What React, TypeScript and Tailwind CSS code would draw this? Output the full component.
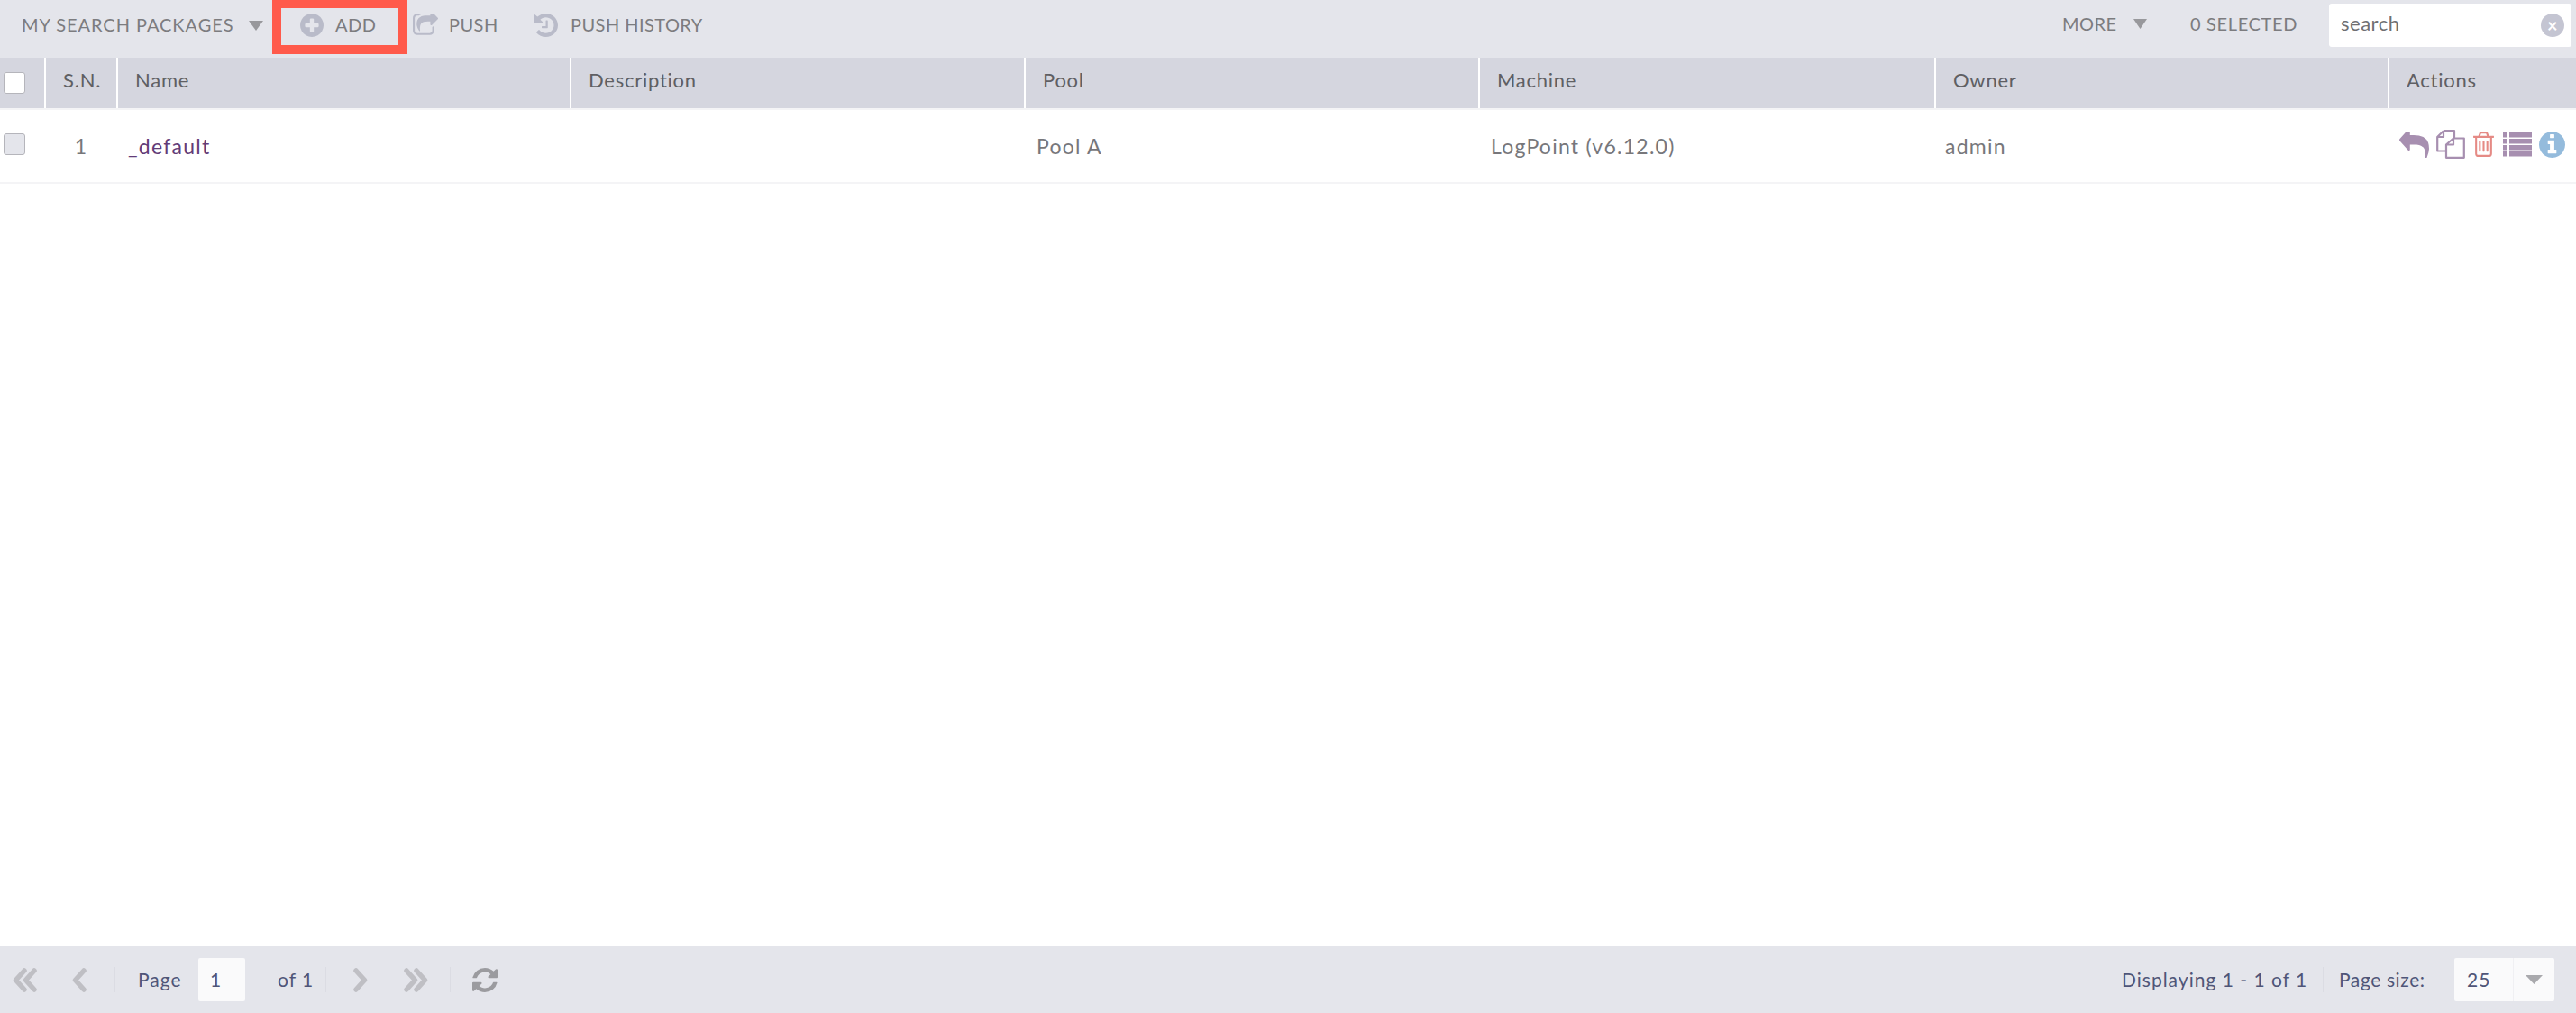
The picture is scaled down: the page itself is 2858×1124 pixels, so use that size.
import React from "react";

const FA = {
  plus: "M1344 960v-128q0-26-19-45t-45-19h-256v-256q0-26-19-45t-45-19h-128q-26 0-45 19t-19 45v256h-256q-26 0-45 19t-19 45v128q0 26 19 45t45 19h256v256q0 26 19 45t45 19h128q26 0 45-19t19-45v-256h256q26 0 45-19t19-45zm320-64q0 209-103 385.5t-279.5 279.5-385.5 103-385.5-103-279.5-279.5-103-385.5 103-385.5 279.5-279.5 385.5-103 385.5 103 279.5 279.5 103 385.5z",
  share: "M1472 989v259q0 119-84.5 203.5t-203.5 84.5h-832q-119 0-203.5-84.5t-84.5-203.5v-832q0-119 84.5-203.5t203.5-84.5h255q13 0 22.5 9.5t9.5 22.5q0 27-26 32-77 26-133 60-10 4-16 4h-112q-66 0-113 47t-47 113v832q0 66 47 113t113 47h832q66 0 113-47t47-113v-214q0-19 18-29 28-13 54-37 16-16 35-8 21 9 21 29zm237-496l-384 384q-18 19-45 19-12 0-25-5-39-17-39-59v-192h-160q-323 0-438 131-119 137-74 473 3 23-20 34-8 2-12 2-16 0-26-13-10-14-21-31t-39.5-68.5-49.5-99.5-38.5-114-17.5-122q0-49 3.5-91t14-90 28-88 47-81.5 68.5-74 94.5-61.5 124.5-48.5 159.5-30.5 196.5-11h160v-192q0-42 39-59 13-5 25-5 26 0 45 19l384 384q19 19 19 45t-19 45z",
  history: "M1664 896q0 156-61 298t-164 245-245 164-298 61q-172 0-327-72.5t-264-204.5q-7-10-6.5-22.5t8.5-20.5l137-138q10-9 25-9 16 2 23 12 73 95 179 147t225 52q104 0 198.5-40.5t163.5-109.5 109.5-163.5 40.5-198.5-40.5-198.5-109.5-163.5-163.5-109.5-198.5-40.5q-98 0-188 35.5t-160 101.5l137 138q31 30 14 69-17 40-59 40h-448q-26 0-45-19t-19-45v-448q0-42 40-59 39-17 69 14l130 129q107-101 244.5-156.5t284.5-55.5q156 0 298 61t245 164 164 245 61 298zm-640-288v448q0 14-9 23t-23 9h-320q-14 0-23-9t-9-23v-64q0-14 9-23t23-9h224v-352q0-14 9-23t23-9h64q14 0 23 9t9 23z",
  reply: "M1792 1120q0 166-127 451-3 7-10.5 24t-13.5 30-13 22q-12 17-28 17-15 0-23.5-10t-8.5-25q0-9 2.5-26.5t2.5-23.5q5-68 5-123 0-101-17.5-181t-48.5-138.5-80-101-105.5-69.5-133-42.5-154-21.5-175.5-6h-224v256q0 26-19 45t-45 19-45-19l-512-512q-19-19-19-45t19-45l512-512q19-19 45-19t45 19 19 45v256h224q713 0 875 403 53 134 53 333z",
  trash: "M704 736v576q0 14-9 23t-23 9h-64q-14 0-23-9t-9-23v-576q0-14 9-23t23-9h64q14 0 23 9t9 23zm256 0v576q0 14-9 23t-23 9h-64q-14 0-23-9t-9-23v-576q0-14 9-23t23-9h64q14 0 23 9t9 23zm256 0v576q0 14-9 23t-23 9h-64q-14 0-23-9t-9-23v-576q0-14 9-23t23-9h64q14 0 23 9t9 23zm128 724v-948h-896v948q0 22 7 40.5t14.5 27 10.5 8.5h832q3 0 10.5-8.5t14.5-27 7-40.5zm-672-1076h448l-48-117q-7-9-17-11h-317q-10 2-17 11zm928 32v64q0 14-9 23t-23 9h-96v948q0 83-47 143.5t-113 60.5h-832q-66 0-113-58.5t-47-141.5v-952h-96q-14 0-23-9t-9-23v-64q0-14 9-23t23-9h309l70-167q15-37 54-63t79-26h320q40 0 79 26t54 63l70 167h309q14 0 23 9t9 23z",
  info: "M1152 1376v-160q0-14-9-23t-23-9h-96v-512q0-14-9-23t-23-9h-320q-14 0-23 9t-9 23v160q0 14 9 23t23 9h96v320h-96q-14 0-23 9t-9 23v160q0 14 9 23t23 9h448q14 0 23-9t9-23zm-128-896v-160q0-14-9-23t-23-9h-192q-14 0-23 9t-9 23v160q0 14 9 23t23 9h192q14 0 23-9t9-23zm640 416q0 209-103 385.5t-279.5 279.5-385.5 103-385.5-103-279.5-279.5-103-385.5 103-385.5 279.5-279.5 385.5-103 385.5 103 279.5 279.5 103 385.5z",
  refresh: "M1639 1056q0 5-1 7-64 268-268 434.5t-478 166.5q-146 0-282.5-55t-243.5-157l-129 129q-19 19-45 19t-45-19-19-45v-448q0-26 19-45t45-19h448q26 0 45 19t19 45-19 45l-137 137q71 66 161 102t187 36q134 0 250-65t186-179q11-17 53-117 8-23 30-23h192q13 0 22.5 9.5t9.5 22.5zm25-800v448q0 26-19 45t-45 19h-448q-26 0-45-19t-19-45 19-45l138-138q-148-137-349-137-134 0-250 65t-186 179q-11 17-53 117-8 23-30 23h-199q-13 0-22.5-9.5t-9.5-22.5v-7q65-268 270-434.5t480-166.5q146 0 284 55.5t245 156.5l130-129q19-19 45-19t45 19 19 45z",
};

function Fa({ d, vb = "128 128 1536 1536", className }: { d: string; vb?: string; className: string }) {
  return (
    <svg viewBox={vb} preserveAspectRatio="none" className={className} fill="currentColor">
      <path d={d} />
    </svg>
  );
}

function Caret({ className }: { className: string }) {
  return (
    <svg viewBox="0 0 16 10" preserveAspectRatio="none" className={className} fill="currentColor">
      <path d="M0 0h16L8 10z" />
    </svg>
  );
}

function Chevrons({ dir, count, className }: { dir: "left" | "right"; count: number; className: string }) {
  const width = count === 2 ? 29 : 21;
  const lines = count === 2 ? [13, 2] : [4];
  return (
    <svg viewBox={`0 0 ${width} 27`} className={className} fill="none" stroke="currentColor" strokeWidth="5.5" strokeLinecap="round" strokeLinejoin="round">
      <g transform={dir === "right" ? `translate(${width} 0) scale(-1 1)` : undefined}>
        {lines.map((x) => (
          <path key={x} d={`M${x + 11} 3 L${x + 1.5} 13.5 L${x + 11} 24`} />
        ))}
      </g>
    </svg>
  );
}

function ListIcon({ className }: { className: string }) {
  return (
    <svg viewBox="0 0 32 27" className={className} fill="currentColor">
      <rect x="0" y="0" width="5" height="5.5" />
      <rect x="7" y="0" width="25" height="5.5" />
      <rect x="0" y="7" width="5" height="5.5" />
      <rect x="7" y="7" width="25" height="5.5" />
      <rect x="0" y="14" width="5" height="5.5" />
      <rect x="7" y="14" width="25" height="5.5" />
      <rect x="0" y="21" width="5" height="5.5" />
      <rect x="7" y="21" width="25" height="5.5" />
    </svg>
  );
}

// two overlapping pages
function FilesIcon({ className }: { className: string }) {
  return (
    <svg viewBox="0 0 32 32" className={className} fill="none" stroke="currentColor" strokeWidth="2.2" strokeLinejoin="round">
      <path d="M8 1.2H20V10M8 1.2L1.2 8V23.5H11M8 1.2V8H1.2" />
      <path d="M19 9.5H30.8V30.8H11V16.5L19 9.5V16.5H11" />
    </svg>
  );
}

const headers = ["S.N.", "Name", "Description", "Pool", "Machine", "Owner", "Actions"];

function Toolbar() {
  return (
    <div className="flex h-[64px] shrink-0 items-center bg-[#e4e5eb] pb-[8px] text-[20px] tracking-[0.45px] text-[#7c7c7f]">
      <span className="ml-[24px] w-[252px] whitespace-nowrap pb-[2px] tracking-[0.95px]">MY SEARCH PACKAGES</span>
      <Caret className="h-[11px] w-[16px] text-[#98989c]" />
      <Fa d={FA.plus} className="ml-[41px] h-[26px] w-[26px] text-[#b9bbc9]" />
      <span className="ml-[13px] w-[44px] whitespace-nowrap pb-[2px]">ADD</span>
      <Fa d={FA.share} vb="64 128 1664 1536" className="ml-[42px] h-[26px] w-[28px] text-[#b9bbc9]" />
      <span className="ml-[12px] w-[53px] whitespace-nowrap pb-[2px]">PUSH</span>
      <Fa d={FA.history} className="ml-[41px] h-[26px] w-[27px] text-[#b9bbc9]" />
      <span className="ml-[14px] w-[147px] whitespace-nowrap pb-[2px]">PUSH HISTORY</span>
      <div className="ml-auto flex items-center">
        <span className="w-[61px] whitespace-nowrap pb-[4px]">MORE</span>
        <Caret className="mb-[4px] ml-[18px] h-[11px] w-[15px] text-[#98989c]" />
        <span className="ml-[48px] w-[120px] whitespace-nowrap pb-[4px] tracking-[0.65px]">0 SELECTED</span>
        <div className="ml-[34px] mr-[5px] flex h-[48px] w-[269px] items-center rounded-[3px] bg-white pl-[13px] pr-[8px] text-[22px] tracking-[0.5px] text-[#6f6f72]">
          <span className="pb-[5px]">search</span>
          <span className="ml-auto flex h-[26px] w-[26px] items-center justify-center rounded-full bg-[#c4c5d2] text-[20px] font-bold leading-none text-white">
            ×
          </span>
        </div>
      </div>
    </div>
  );
}

function HeaderRow() {
  return (
    <div className="grid h-[58px] shrink-0 grid-cols-[51px_80px_503px_504px_504px_506px_503px_207px] border-b-2 border-[#f4f4f6] bg-[#d5d6df] text-[22px] tracking-[0.75px] text-[#5f5f63]">
      <div className="flex items-center border-r-2 border-white pl-[4px]">
        <span className="h-[24px] w-[24px] rounded-[3px] border border-[#b5b5bb] bg-white" />
      </div>
      {headers.map((h, i) => (
        <div key={h} className={`flex items-center pb-[8px] pl-[19px] ${i < headers.length - 1 ? "border-r-2 border-white" : ""}`}>
          {h}
        </div>
      ))}
    </div>
  );
}

function DataRow() {
  return (
    <div className="grid h-[82px] shrink-0 grid-cols-[49px_80px_503px_504px_504px_506px_503px_209px] border-b-2 border-[#f4f4f6] text-[23px] tracking-[1.25px] text-[#77777b]">
      <div className="flex items-center pb-[4px] pl-[4px]">
        <span className="h-[24px] w-[24px] rounded-[3px] border border-[#b5b5bb] bg-[#e4e5eb]" />
      </div>
      <div className="flex items-center justify-center pl-[2px]">1</div>
      <div className="flex items-center pl-[13px] text-[#633c78]">_default</div>
      <div />
      <div className="flex items-center pl-[14px]">Pool A</div>
      <div className="flex items-center pl-[14px]">LogPoint (v6.12.0)</div>
      <div className="flex items-center pl-[12px]">admin</div>
      <div className="flex items-center pb-[4px] pl-[13px]">
        <Fa d={FA.reply} vb="0 192 1792 1408" className="h-[29px] w-[33px] text-[#a78fb0]" />
        <FilesIcon className="ml-[8px] h-[32px] w-[32px] text-[#a78fb0]" />
        <Fa d={FA.trash} className="ml-[8px] h-[28px] w-[25px] text-[#e58a85]" />
        <ListIcon className="ml-[9px] h-[27px] w-[32px] text-[#a78fb0]" />
        <Fa d={FA.info} className="ml-[8px] h-[29px] w-[29px] text-[#94bbdc]" />
      </div>
    </div>
  );
}

function Sep({ className }: { className: string }) {
  return <span className={`h-[28px] w-[1px] bg-[#dbdce3] ${className}`} />;
}

function Pager() {
  return (
    <div className="flex h-[74px] shrink-0 items-center bg-[#e4e5eb] text-[21px] tracking-[1px] text-[#4f5578]">
      <Chevrons dir="left" count={2} className="ml-[14px] h-[27px] w-[29px] text-[#bfbfc4]" />
      <Chevrons dir="left" count={1} className="ml-[35px] h-[27px] w-[21px] text-[#bfbfc4]" />
      <Sep className="ml-[28px]" />
      <span className="ml-[25px] w-[51px]">Page</span>
      <span className="ml-[16px] flex h-[48px] w-[52px] items-center rounded-[2px] bg-[#fafafb] pl-[13px]">1</span>
      <span className="ml-[36px] w-[36px] whitespace-nowrap">of 1</span>
      <Sep className="ml-[17px]" />
      <Chevrons dir="right" count={1} className="ml-[27px] h-[27px] w-[21px] text-[#bfbfc4]" />
      <Chevrons dir="right" count={2} className="ml-[36px] h-[27px] w-[29px] text-[#bfbfc4]" />
      <Sep className="ml-[24px]" />
      <Fa d={FA.refresh} className="ml-[24px] h-[27px] w-[28px] text-[#9b9b9f]" />
      <div className="ml-auto flex items-center">
        <span className="w-[207px] whitespace-nowrap">Displaying 1 - 1 of 1</span>
        <Sep className="ml-[16px]" />
        <span className="ml-[17px] w-[102px] whitespace-nowrap tracking-[0.6px]">Page size:</span>
        <div className="ml-[26px] mr-[24px] flex h-[48px] w-[111px] items-center rounded-[2px] bg-[#fafafb]">
          <span className="w-[66px] border-r border-[#f0f0f3] pl-[14px] leading-[48px]">25</span>
          <Caret className="ml-[13px] h-[10px] w-[19px] text-[#a9a9ad]" />
        </div>
      </div>
    </div>
  );
}

export default function App() {
  return (
    <div className="relative flex h-[1124px] w-[2858px] flex-col overflow-hidden bg-white font-['Lato',sans-serif]">
      <Toolbar />
      <HeaderRow />
      <DataRow />
      <div className="flex-1" />
      <Pager />
      <div className="absolute left-[302px] top-0 h-[60px] w-[150px] border-x-[10px] border-b-[10px] border-t-[9px] border-[#ff5a4b]" />
    </div>
  );
}
